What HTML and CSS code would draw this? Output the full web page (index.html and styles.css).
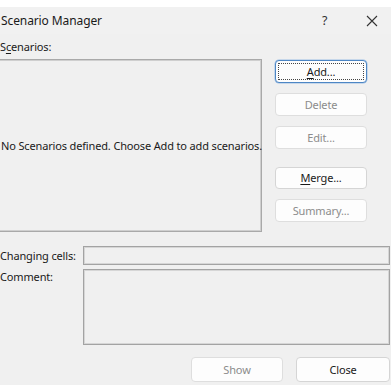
FILE: index.html
```html
<!DOCTYPE html>
<html>
<head>
<meta charset="utf-8">
<link rel="stylesheet" href="styles.css">
</head>
<body>
<div class="strip"></div>
<div class="dialog">
  <div class="titlebar">
    <span class="title">Scenario Manager</span>
    <span class="help">?</span>
    <span class="close">
      <svg width="12" height="12" viewBox="0 0 12 12"><path d="M1 1L11 11M11 1L1 11" stroke="#333" stroke-width="1.1" fill="none"/></svg>
    </span>
  </div>
  <div class="label-row">S<u>c</u>enarios:</div>
  <div class="main">
    <div class="listbox">No Scenarios defined. Choose Add to add scenarios.</div>
    <div class="side">
      <button class="btn focus"><span class="focus-rect"><u>A</u>dd...</span></button>
      <button class="btn disabled">Delete</button>
      <button class="btn disabled">Edit...</button>
      <button class="btn merge"><u>M</u>erge...</button>
      <button class="btn disabled">Summary...</button>
    </div>
  </div>
  <div class="field-row">
    <span class="flabel">Changing cells:</span>
    <div class="input"></div>
  </div>
  <div class="field-row comment">
    <span class="flabel">Comment:</span>
    <div class="input big"></div>
  </div>
  <div class="bottom">
    <button class="btn disabled wide1">Show</button>
    <button class="btn wide2">Close</button>
  </div>
</div>
</body>
</html>
```
FILE: styles.css
```css
html, body {
  margin: 0;
  padding: 0;
  background: #f0f0f0;
}
body {
  width: 391px;
  height: 385px;
  overflow: hidden;
  font-family: "Noto Sans", "Open Sans", sans-serif;
  font-size: 11px;
  letter-spacing: -0.15px;
  color: #1a1a1a;
}
.strip {
  height: 7px;
  background: #ffffff;
}
.dialog {
  background: #f0f0f0;
}
.titlebar {
  height: 27px;
  display: flex;
  align-items: center;
  background: #f1f1f1;
}
.title {
  font-size: 12px;
  letter-spacing: -0.1px;
  padding-left: 1px;
  flex: 1;
  color: #1a1a1a;
}
.help {
  font-size: 12.5px;
  width: 14px;
  margin-right: 30px;
  color: #333;
}
.close {
  width: 12px;
  margin-right: 13px;
  display: flex;
}
.label-row {
  height: 25px;
  line-height: 26px;
  padding-left: 0;
}
.label-row u {
  text-underline-offset: 2px;
}
.main {
  display: flex;
  gap: 13px;
  height: 173px;
}
.listbox {
  width: 264px;
  margin-left: -2px;
  box-sizing: border-box;
  border: 1px solid #a9a9a9;
  box-shadow: inset 0 0 0 1px #cfcfcf;
  display: flex;
  align-items: center;
  justify-content: center;
  white-space: nowrap;
  padding-left: 3px;
}
.side {
  display: flex;
  flex-direction: column;
  padding-top: 1px;
}
.btn {
  width: 92px;
  height: 23px;
  box-sizing: border-box;
  background: #fdfdfd;
  border: 1px solid #d5d5d5;
  border-radius: 4px;
  font-family: "Noto Sans", "Open Sans", sans-serif;
  font-size: 11px;
  letter-spacing: -0.15px;
  color: #1a1a1a;
  padding: 0;
  margin: 0 0 10px 0;
  display: flex;
  align-items: center;
  justify-content: center;
}
.btn u {
  text-underline-offset: 2px;
}
.btn.disabled {
  color: #8c8c8c;
  border-color: #dedede;
}
.btn.focus {
  border: 1px solid #4d86c4;
  box-shadow: 0 0 0 0.5px #9bbde3;
  padding: 2px;
}
.focus-rect {
  flex: 1;
  align-self: stretch;
  border: 1px dotted #444;
  display: flex;
  align-items: center;
  justify-content: center;
}
.btn.merge {
  margin-top: 8px;
}
.field-row {
  display: flex;
  margin-top: 14px;
}
.field-row.comment {
  margin-top: 4px;
}
.flabel {
  width: 83px;
  flex: none;
  line-height: 19px;
}
.comment .flabel {
  line-height: 16px;
}
.input {
  width: 307px;
  height: 19px;
  box-sizing: border-box;
  border: 1px solid #a3a3a3;
  box-shadow: inset 0 0 0 1px #d6d6d6;
}
.input.big {
  height: 76px;
}
.bottom {
  display: flex;
  gap: 13px;
  margin-top: 12px;
  padding-left: 191px;
}
.bottom .btn {
  height: 25px;
  margin: 0;
}
.wide1 { width: 92px; }
.wide2 { width: 94px; }
```
